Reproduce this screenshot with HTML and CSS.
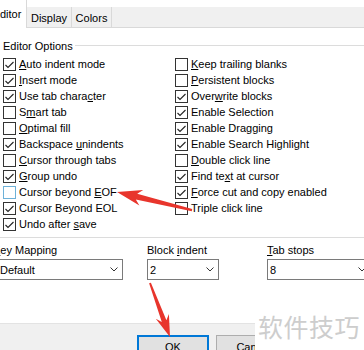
FILE: index.html
```html
<!DOCTYPE html>
<html>
<head>
<meta charset="utf-8">
<link rel="stylesheet" href="styles.css">
</head>
<body>
<div class="tabbar">
  <div class="tab active">Editor</div>
  <div class="tab display">Display</div>
  <div class="tab colors">Colors</div>
</div>
<div class="page">
  <div class="group">
    <div class="group-head"><span class="legend">Editor Options</span><span class="rule"></span></div>
    <div class="cols">
      <div class="col left">
        <div class="row"><span class="cb on"><svg viewBox="0 0 11 11"><polyline points="1.5,6 4,8.5 9.5,3"/></svg></span><span><u>A</u>uto indent mode</span></div>
        <div class="row"><span class="cb on"><svg viewBox="0 0 11 11"><polyline points="1.5,6 4,8.5 9.5,3"/></svg></span><span><u>I</u>nsert mode</span></div>
        <div class="row"><span class="cb on"><svg viewBox="0 0 11 11"><polyline points="1.5,6 4,8.5 9.5,3"/></svg></span><span>Use tab chara<u>c</u>ter</span></div>
        <div class="row"><span class="cb"></span><span>S<u>m</u>art tab</span></div>
        <div class="row"><span class="cb"></span><span><u>O</u>ptimal fill</span></div>
        <div class="row"><span class="cb on"><svg viewBox="0 0 11 11"><polyline points="1.5,6 4,8.5 9.5,3"/></svg></span><span>Backspace <u>u</u>nindents</span></div>
        <div class="row"><span class="cb"></span><span><u>C</u>ursor through tabs</span></div>
        <div class="row"><span class="cb on"><svg viewBox="0 0 11 11"><polyline points="1.5,6 4,8.5 9.5,3"/></svg></span><span><u>G</u>roup undo</span></div>
        <div class="row"><span class="cb hover"></span><span>Cursor beyond <u>E</u>OF</span></div>
        <div class="row"><span class="cb on"><svg viewBox="0 0 11 11"><polyline points="1.5,6 4,8.5 9.5,3"/></svg></span><span>Cursor Beyond EOL</span></div>
        <div class="row"><span class="cb on"><svg viewBox="0 0 11 11"><polyline points="1.5,6 4,8.5 9.5,3"/></svg></span><span>Undo after <u>s</u>ave</span></div>
      </div>
      <div class="col right">
        <div class="row"><span class="cb"></span><span><u>K</u>eep trailing blanks</span></div>
        <div class="row"><span class="cb"></span><span><u>P</u>ersistent blocks</span></div>
        <div class="row"><span class="cb on"><svg viewBox="0 0 11 11"><polyline points="1.5,6 4,8.5 9.5,3"/></svg></span><span>Over<u>w</u>rite blocks</span></div>
        <div class="row"><span class="cb on"><svg viewBox="0 0 11 11"><polyline points="1.5,6 4,8.5 9.5,3"/></svg></span><span>Enable Selection</span></div>
        <div class="row"><span class="cb on"><svg viewBox="0 0 11 11"><polyline points="1.5,6 4,8.5 9.5,3"/></svg></span><span>Enable Dragging</span></div>
        <div class="row"><span class="cb on"><svg viewBox="0 0 11 11"><polyline points="1.5,6 4,8.5 9.5,3"/></svg></span><span>Enable Search Highlight</span></div>
        <div class="row"><span class="cb"></span><span><u>D</u>ouble click line</span></div>
        <div class="row"><span class="cb on"><svg viewBox="0 0 11 11"><polyline points="1.5,6 4,8.5 9.5,3"/></svg></span><span>Find te<u>x</u>t at cursor</span></div>
        <div class="row"><span class="cb on"><svg viewBox="0 0 11 11"><polyline points="1.5,6 4,8.5 9.5,3"/></svg></span><span><u>F</u>orce cut and copy enabled</span></div>
        <div class="row"><span class="cb"></span><span>Triple click line</span></div>
      </div>
    </div>
  </div>
  <div class="fields">
    <div class="field km">
      <div class="label"><u>K</u>ey Mapping</div>
      <div class="combo"><span>Default</span><svg class="chev" viewBox="0 0 8 5"><polyline points="0.5,0.5 4,4 7.5,0.5"/></svg></div>
    </div>
    <div class="field bi">
      <div class="label">Block <u>i</u>ndent</div>
      <div class="combo"><span>2</span><svg class="chev" viewBox="0 0 8 5"><polyline points="0.5,0.5 4,4 7.5,0.5"/></svg></div>
    </div>
    <div class="field ts">
      <div class="label"><u>T</u>ab stops</div>
      <div class="combo"><span>8</span><svg class="chev" viewBox="0 0 8 5"><polyline points="0.5,0.5 4,4 7.5,0.5"/></svg></div>
    </div>
  </div>
</div>
<div class="buttons">
  <div class="btn ok">OK</div>
  <div class="btn cancel">Cancel</div>
</div>
<div class="watermark">软件技巧</div>
<svg class="arrows" viewBox="0 0 364 350">
  <polygon points="117,192 143.2,190 137.2,193.8 192.2,209 191.8,211.2 135.8,199.6 139.4,205.6"/>
  <polygon points="170,337 155.8,318.8 161.8,322 149.1,283.3 150.9,282.7 166.4,320.2 168.9,314"/>
</svg>
</body>
</html>
```

FILE: styles.css
```css
html, body {
  margin: 0;
  padding: 0;
}
body {
  display: flow-root;
  width: 364px;
  height: 350px;
  overflow: hidden;
  position: relative;
  background: #fff;
  color: #000;
  font-family: "Liberation Sans", Arial, sans-serif;
  font-size: 11px;
}
u {
  text-decoration: underline;
  text-decoration-thickness: 1px;
  text-underline-offset: 1px;
}
.tabbar {
  display: flex;
  margin-top: 7px;
  height: 20px;
  background: #f0f0f0;
  border-bottom: 1px solid #d9d9d9;
}
.tab {
  display: flex;
  align-items: center;
  justify-content: center;
  border-right: 1px solid #d9d9d9;
  padding-top: 1px;
  box-sizing: border-box;
  white-space: nowrap;
  flex: none;
}
.tab.active {
  margin-top: -7px;
  height: 28px;
  width: 39px;
  margin-left: -12px;
  background: #fff;
  padding-top: 0;
}
.tab.display {
  width: 45px;
}
.tab.colors {
  width: 40px;
}
.page {
  height: 295px;
  box-sizing: border-box;
  padding-top: 10px;
}
.group {
  border-bottom: 1px solid #dcdcdc;
  padding-bottom: 5px;
}
.group-head {
  display: flex;
  align-items: center;
  height: 15px;
  padding-left: 3px;
}
.rule {
  flex: 1;
  height: 1px;
  background: #dcdcdc;
  margin-left: 2px;
}
.cols {
  display: flex;
  margin-top: 3px;
  padding-left: 3px;
}
.col.left {
  width: 172px;
  flex: none;
}
.col.right {
  flex: 1;
}
.row {
  display: flex;
  align-items: center;
  height: 16px;
  gap: 3px;
  white-space: nowrap;
}
.cb {
  flex: none;
  width: 13px;
  height: 13px;
  box-sizing: border-box;
  border: 1px solid #333;
  background: #fff;
  display: flex;
}
.cb svg {
  width: 11px;
  height: 11px;
}
.cb polyline {
  fill: none;
  stroke: #222;
  stroke-width: 1.1;
}
.cb.hover {
  border-color: #6db1d8;
}
.fields {
  display: flex;
  margin-top: 5px;
}
.field {
  flex: none;
}
.field .label {
  height: 14px;
  line-height: 14px;
  margin-bottom: 2px;
  white-space: nowrap;
}
.field.km {
  margin-left: -3px;
  width: 126px;
}
.field.km .label {
  margin-left: -4px;
}
.field.bi {
  margin-left: 24px;
  width: 72px;
}
.field.ts {
  margin-left: 48px;
  width: 104px;
}
.combo {
  height: 21px;
  box-sizing: border-box;
  border: 1px solid #7a7a7a;
  display: flex;
  align-items: center;
  justify-content: space-between;
  padding: 0 4px 0 2px;
  background: #fff;
}
.chev {
  width: 8px;
  height: 5px;
}
.chev polyline {
  fill: none;
  stroke: #333;
  stroke-width: 1;
}
.buttons {
  height: 27px;
  box-sizing: border-box;
  background: #f0f0f0;
  border-top: 1px solid #e3e3e3;
  padding-top: 11px;
  padding-left: 137px;
  display: flex;
  gap: 7px;
}
.btn {
  flex: none;
  height: 23px;
  box-sizing: border-box;
  background: #e1e1e1;
  border: 1px solid #adadad;
  display: flex;
  align-items: center;
  justify-content: center;
}
.btn.ok {
  width: 72px;
  border-color: #0078d7;
  box-shadow: inset 0 0 0 1px #0078d7;
}
.btn.cancel {
  width: 75px;
}
.watermark {
  position: absolute;
  right: 0;
  bottom: 0;
  width: 109px;
  height: 45px;
  background: #fff;
  color: #cdcdcd;
  font-family: "Noto Sans CJK SC", sans-serif;
  font-size: 25px;
  line-height: 25px;
  letter-spacing: 0.5px;
  box-sizing: border-box;
  padding: 0 0 11px 3px;
  display: flex;
  align-items: flex-end;
  white-space: nowrap;
}
.arrows {
  position: absolute;
  left: 0;
  top: 0;
  width: 364px;
  height: 350px;
  pointer-events: none;
}
.arrows polygon {
  fill: #e8352c;
}
```
